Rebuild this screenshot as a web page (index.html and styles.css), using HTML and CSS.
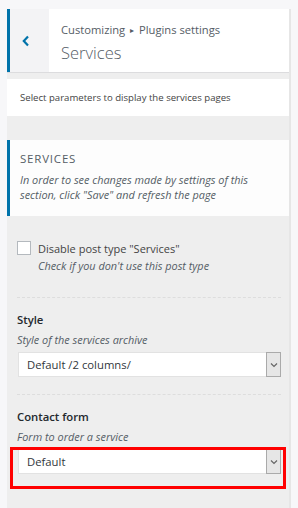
FILE: index.html
```html
<!DOCTYPE html>
<html>
<head>
<meta charset="utf-8">
<link rel="stylesheet" href="styles.css">
</head>
<body>
<div class="page">
  <div class="panel">
    <div class="header">
      <div class="back">
        <svg width="10" height="12" viewBox="0 0 10 12"><path d="M7 1.5 L2.8 6 L7 10.5" fill="none" stroke="#0073aa" stroke-width="2.2"/></svg>
      </div>
      <div class="titles">
        <div class="crumb">Customizing <span class="tri">▸</span> Plugins settings</div>
        <div class="title">Services</div>
      </div>
    </div>
    <div class="desc">Select parameters to display the services pages</div>
    <div class="section">
      <div class="sec-title">SERVICES</div>
      <div class="sec-desc">In order to see changes made by settings of this section, click "Save" and refresh the page</div>
    </div>
    <div class="controls">
      <div class="control check-row">
        <span class="box"></span>
        <div>
          <div class="check-label">Disable post type "Services"</div>
          <div class="hint">Check if you don't use this post type</div>
        </div>
      </div>
      <div class="control">
        <div class="label">Style</div>
        <div class="hint">Style of the services archive</div>
        <div class="select"><span class="val">Default /2 columns/</span><span class="arrow"><svg width="8" height="6" viewBox="0 0 8 6"><path d="M1 1.5 L4 4.5 L7 1.5" fill="none" stroke="#666" stroke-width="1.2"/></svg></span></div>
      </div>
      <div class="control last">
        <div class="label">Contact form</div>
        <div class="hint">Form to order a service</div>
        <div class="select-wrap">
          <div class="select"><span class="val">Default</span><span class="arrow"><svg width="8" height="6" viewBox="0 0 8 6"><path d="M1 1.5 L4 4.5 L7 1.5" fill="none" stroke="#666" stroke-width="1.2"/></svg></span></div>
          <div class="highlight"></div>
        </div>
      </div>
    </div>
  </div>
</div>
</body>
</html>
```

FILE: styles.css
```css
html, body { margin: 0; padding: 0; }
body {
  background: #f7f7f9;
  font-family: "Open Sans", "Noto Sans", sans-serif;
  color: #555d66;
  width: 298px;
  height: 508px;
  overflow: hidden;
}
.page {
  padding: 9px 0 0 7px;
  display: flex;
}
.panel {
  width: 282px;
  min-height: 499px;
  background: #eeeeee;
  border-right: 2px solid #e6e6e6;
  display: flex;
  flex-direction: column;
}
.header {
  height: 63px;
  background: #fff;
  border-bottom: 1px solid #dcdcde;
  display: flex;
}
.back {
  width: 39px;
  background: #f3f3f5;
  border-left: 3px solid #0073aa;
  display: flex;
  align-items: center;
  justify-content: center;
}
.back svg { margin-left: -7px; margin-top: 1px; }
.titles {
  padding: 13px 0 0 12px;
}
.crumb {
  font-size: 11.2px;
  line-height: 16px;
  color: #555d66;
}
.tri { font-size: 8px; position: relative; top: -1px; padding: 0 2px; }
.title {
  font-size: 16.5px;
  line-height: 24px;
  font-weight: 300;
  color: #555d66;
  margin-top: 2px;
}
.desc {
  margin-top: 6px;
  background: #fff;
  height: 37px;
  box-sizing: border-box;
  padding: 11px 0 0 13px;
  font-size: 9.6px;
  line-height: 16px;
  color: #444;
}
.section {
  margin-top: 24px;
  background: #fdfdfd;
  border-left: 3px solid #0073aa;
  height: 76px;
  box-sizing: border-box;
  padding: 10px 8px 0 10px;
}
.sec-title {
  font-size: 11.5px;
  letter-spacing: 0.8px;
  line-height: 18px;
  color: #555d66;
}
.sec-desc {
  font-size: 10.9px;
  font-style: italic;
  line-height: 14.5px;
  margin-top: 5px;
  color: #555d66;
}
.controls {
  padding: 25px 8px 0 10px;
}
.control {
  border-bottom: 1px dashed #dddddd;
  padding-bottom: 17px;
  margin-bottom: 13px;
}
.control.last { border-bottom: 0; }
.check-row {
  display: flex;
  gap: 7px;
  padding-bottom: 23px;
  margin-bottom: 13px;
}
.box {
  width: 14px;
  height: 14px;
  box-sizing: border-box;
  border: 1px solid #b4b9be;
  background: #fff;
  flex: none;
  margin-top: 0;
}
.check-label {
  font-size: 11px;
  line-height: 16px;
  color: #444;
}
.hint {
  font-size: 10.9px;
  font-style: italic;
  line-height: 16px;
  color: #555d66;
  margin-top: 1px;
}
.control .label + .hint { margin-top: 3px; }
.label {
  font-size: 11.3px;
  font-weight: 600;
  line-height: 18px;
  color: #23282d;
}
.select {
  margin-top: 4px;
  height: 25px;
  box-sizing: border-box;
  background: #fff;
  border: 1px solid #e2e2e2;
  display: flex;
  align-items: center;
  margin-left: 1px;
}
.val {
  flex: 1;
  padding-left: 8px;
  font-size: 11.3px;
  color: #32373c;
}
.arrow {
  width: 15px;
  height: 25px;
  margin: -1px -1px -1px 0;
  box-sizing: border-box;
  border: 1px solid #aaa;
  background: #e6e6e6;
  display: flex;
  align-items: center;
  justify-content: center;
}
.select-wrap { position: relative; }
.highlight {
  position: absolute;
  left: -7px;
  right: -5px;
  top: -2px;
  height: 42px;
  box-sizing: border-box;
  border: 3px solid #ff0000;
}
```
